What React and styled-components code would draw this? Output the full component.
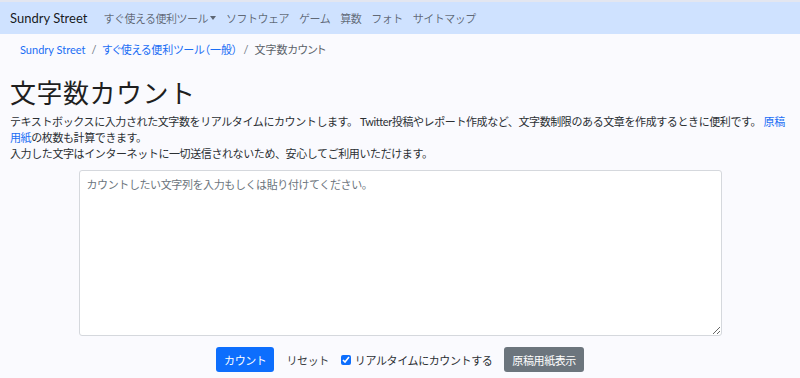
import styled, { createGlobalStyle } from 'styled-components'

const GlobalStyle = createGlobalStyle`
  html, body {
    margin: 0;
    padding: 0;
    background: #fafafe;
    font-family: Lato, "Noto Sans CJK JP", sans-serif;
    color: #212529;
  }
  * { box-sizing: border-box; }
`

const navItems = ['ソフトウェア', 'ゲーム', '算数', 'フォト', 'サイトマップ']

function App() {
  return (
    <>
      <GlobalStyle />
      <Navbar>
        <Brand>Sundry Street</Brand>
        <NavList>
          <NavItem>すぐ使える便利ツール<Caret /></NavItem>
          {navItems.map(item => <NavItem key={item}>{item}</NavItem>)}
        </NavList>
      </Navbar>
      <Main>
        <Breadcrumb>
          <Crumb href="#">Sundry Street</Crumb>
          <Sep>/</Sep>
          <Crumb href="#">すぐ使える便利ツール（一般）</Crumb>
          <Sep>/</Sep>
          <Current>文字数カウント</Current>
        </Breadcrumb>
        <Title>文字数カウント</Title>
        <Lead>
          テキストボックスに入力された文字数をリアルタイムにカウントします。 Twitter投稿やレポート作成など、文字数制限のある文章を作成するときに便利です。 <Link href="#">原稿用紙</Link>の枚数も計算できます。
        </Lead>
        <Lead>入力した文字はインターネットに一切送信されないため、安心してご利用いただけます。</Lead>
        <TextBox placeholder="カウントしたい文字列を入力もしくは貼り付けてください。" />
        <Actions>
          <Button $variant="primary">カウント</Button>
          <PlainButton>リセット</PlainButton>
          <Check>
            <input type="checkbox" defaultChecked />
            リアルタイムにカウントする
          </Check>
          <Button $variant="secondary">原稿用紙表示</Button>
        </Actions>
      </Main>
    </>
  )
}

const Navbar = styled.nav`
  display: flex;
  align-items: center;
  height: 34px;
  padding: 0 10px;
  background: #cfe2ff;
  border-top: 2px solid #e3e6f0;
`

const Brand = styled.a`
  font-size: 13px;
  color: rgba(0, 0, 0, 0.9);
  margin-right: 16px;
`

const NavList = styled.ul`
  display: flex;
  list-style: none;
  margin: 0;
  padding: 0;
  gap: 10px;
`

const NavItem = styled.li`
  display: flex;
  align-items: center;
  font-size: 11px;
  letter-spacing: -0.5px;
  color: rgba(0, 0, 0, 0.55);
`

const Caret = styled.span`
  display: inline-block;
  margin-left: 2px;
  border-top: 4px solid rgba(0, 0, 0, 0.55);
  border-left: 3.5px solid transparent;
  border-right: 3.5px solid transparent;
`

const Main = styled.main`
  padding: 0 10px;
`

const Breadcrumb = styled.div`
  display: flex;
  align-items: center;
  gap: 6px;
  padding: 2px 10px 0;
  height: 28px;
  font-size: 11px;
  font-feature-settings: "palt";
`

const Crumb = styled.a`
  color: #1a6ef5;
  text-decoration: none;
`

const Sep = styled.span`
  color: #6c757d;
`

const Current = styled.span`
  color: #5c636a;
`

const Title = styled.h1`
  margin: 14px 0 4px;
  font-size: 26px;
  font-weight: 400;
  line-height: 34px;
  color: #1f1f1f;
  letter-spacing: 0.5px;
`

const Lead = styled.p`
  margin: 0;
  font-size: 11px;
  line-height: 16px;
  letter-spacing: -0.4px;
  color: #2b2f33;
`

const Link = styled.a`
  color: #1a6ef5;
  text-decoration: none;
`

const TextBox = styled.textarea`
  display: block;
  width: 643px;
  height: 166px;
  margin: 8px auto 0;
  padding: 5px 7px;
  border: 1px solid #d5d8dd;
  border-radius: 3px;
  background: #fff;
  font-family: inherit;
  font-size: 11px;
  letter-spacing: -0.4px;
  &::placeholder { color: #6c757d; }
`

const Actions = styled.div`
  display: flex;
  justify-content: center;
  align-items: center;
  gap: 12px;
  margin-top: 11px;
`

const Button = styled.button`
  height: 25px;
  padding: 0 8px;
  border: none;
  border-radius: 3px;
  font-family: inherit;
  font-size: 11px;
  letter-spacing: -0.4px;
  color: #fff;
  background: ${p => (p.$variant === 'primary' ? '#0d6efd' : '#6c757d')};
`

const PlainButton = styled.button`
  height: 25px;
  padding: 0;
  border: none;
  background: none;
  font-family: inherit;
  font-size: 11px;
  letter-spacing: -0.4px;
  color: #3a3f44;
`

const Check = styled.label`
  display: flex;
  align-items: center;
  gap: 2px;
  font-size: 11px;
  letter-spacing: -0.4px;
  color: #2b2f33;
  input {
    width: 10px;
    height: 10px;
    margin: 0 2px 0 0;
    accent-color: #0d6efd;
  }
`

export default App
